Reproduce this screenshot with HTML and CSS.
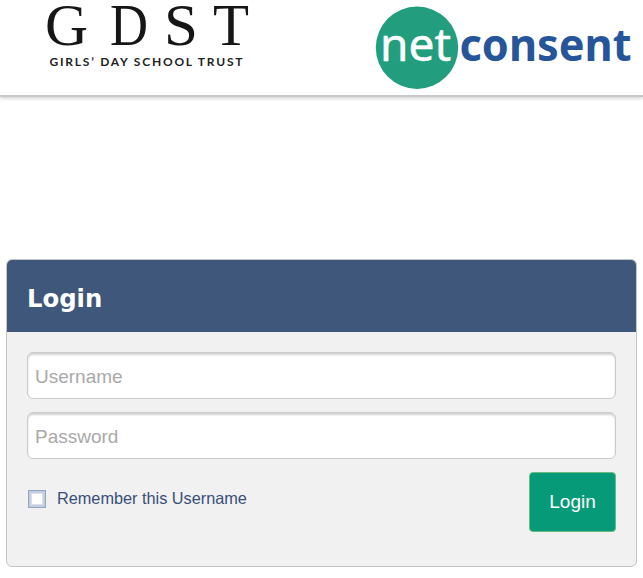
FILE: index.html
```
<!DOCTYPE html>
<html lang="en">
<head>
    <meta charset="UTF-8">
    <meta name="viewport" content="width=device-width, initial-scale=1.0">
    <title>Login</title>
    <link rel="stylesheet" href="styles.css">
</head>
<body>
    <header class="header">
        <svg class="logo-gdst" width="210" height="90" viewBox="0 0 210 90" role="img" aria-label="GDST">
            <g class="gdst-letters">
                <text x="5" y="44.7" textLength="43" lengthAdjust="spacingAndGlyphs">G</text>
                <text x="70" y="44.7" textLength="38" lengthAdjust="spacingAndGlyphs">D</text>
                <text x="124" y="44.7" textLength="34" lengthAdjust="spacingAndGlyphs">S</text>
                <text x="173" y="44.7" textLength="36" lengthAdjust="spacingAndGlyphs">T</text>
            </g>
            <text class="gdst-name" x="9.5" y="66" textLength="193">GIRLS’ DAY SCHOOL TRUST</text>
        </svg>
        <svg class="logo-netconsent" width="260" height="90" viewBox="0 0 260 90" role="img" aria-label="netconsent">
            <circle cx="42" cy="47.7" r="41.2" fill="#229e7f"/>
            <text class="net" x="5" y="60.7" textLength="71" lengthAdjust="spacingAndGlyphs">net</text>
            <text class="consent" x="84.5" y="60.7" textLength="172" lengthAdjust="spacingAndGlyphs">consent</text>
        </svg>
    </header>

    <form class="panel">
        <div class="panel-header">
            <h1>Login</h1>
        </div>
        <div class="panel-body">
            <input class="field" type="text" placeholder="Username">
            <input class="field" type="password" placeholder="Password">
            <div class="actions">
                <label class="remember">
                    <input type="checkbox" class="checkbox">
                    <span>Remember this Username</span>
                </label>
                <button type="button" class="login-btn">Login</button>
            </div>
        </div>
    </form>
</body>
</html>
```
FILE: styles.css
```
* {
    box-sizing: border-box;
}
body {
    font-family: "Liberation Sans", Arial, sans-serif;
    margin: 0;
    background-color: #fff;
}
.header {
    display: flex;
    justify-content: space-between;
    height: 97px;
    padding: 0 8px 0 40px;
    border-bottom: 2px solid #c9c9c9;
    box-shadow: 0 1px 4px rgba(0, 0, 0, 0.22);
}
.logo-gdst,
.logo-netconsent {
    overflow: visible;
}
.gdst-letters {
    font-family: "Liberation Serif", serif;
    font-size: 59px;
    fill: #161616;
}
.gdst-name {
    font-family: Lato, sans-serif;
    font-size: 12px;
    font-weight: bold;
    fill: #222;
}
.net,
.consent {
    font-family: "Noto Sans", sans-serif;
    font-size: 46px;
}
.net {
    fill: #fff;
    stroke: #fff;
    stroke-width: 0.5px;
}
.consent {
    font-size: 45px;
    font-weight: bold;
    fill: #275599;
}
.panel {
    margin: 162px 6px 0;
    height: 308px;
    background-color: #f1f1f1;
    border: 1px solid #c4c4c4;
    border-radius: 6px;
    overflow: hidden;
}
.panel-header {
    height: 72px;
    padding: 22px 20px 0;
    background-color: #3e577b;
}
.panel-header h1 {
    margin: 0;
    font-family: "DejaVu Sans", Verdana, sans-serif;
    font-size: 24.3px;
    line-height: 33px;
    color: #fff;
}
.panel-body {
    padding: 20px;
}
.field {
    display: block;
    width: 100%;
    height: 47px;
    margin-bottom: 13px;
    padding: 2px 7px 0;
    font-family: inherit;
    font-size: 19px;
    background-color: #fff;
    border: 1px solid #cbcbcb;
    border-radius: 6px;
    box-shadow: inset 0 2px 2px #d2d2d2;
}
.field::placeholder {
    color: #a9a9a9;
}
.actions {
    display: flex;
    justify-content: space-between;
    align-items: flex-start;
}
.remember {
    display: flex;
    align-items: center;
    gap: 11px;
    padding: 16px 0 0 1px;
    font-size: 16.27px;
    line-height: 20px;
    color: #384f7a;
}
.checkbox {
    appearance: none;
    width: 18px;
    height: 18px;
    margin: 2px 0 0;
    background-color: #fff;
    border: 1px solid #91a5c3;
    box-shadow: inset 0 0 0 2px #c3cede, inset 0 0 0 3px #dce1ec;
}
.login-btn {
    width: 87px;
    height: 60px;
    font-family: inherit;
    font-size: 19px;
    color: #fff;
    background-color: #069a78;
    border: 1px solid #66bd7d;
    border-radius: 4px;
}
```
